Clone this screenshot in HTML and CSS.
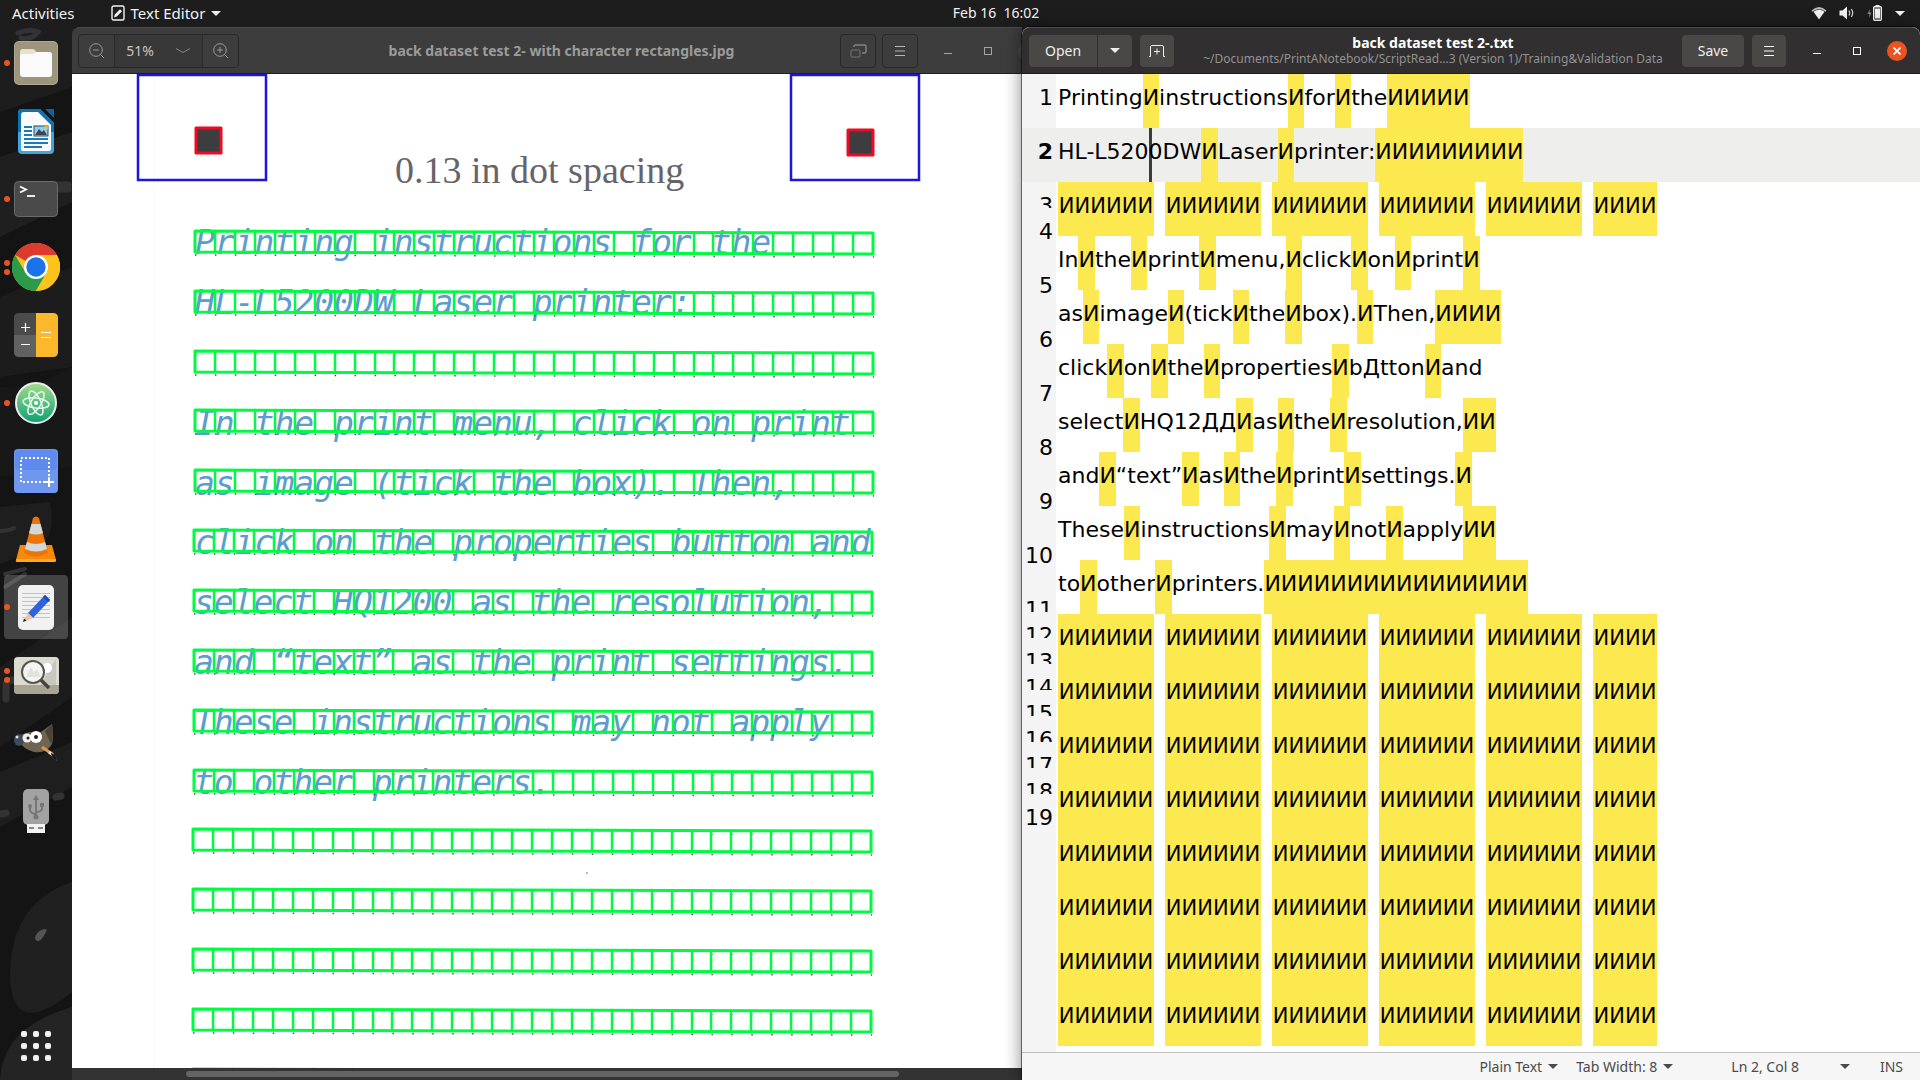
FILE: index.html
```html
<!DOCTYPE html>
<html lang="en">
<head>
<meta charset="utf-8">
<title>back dataset test 2-.txt</title>
<link rel="stylesheet" href="styles.css">
</head>
<body>
<header class="topbar">
  <div class="top-left">
    <button class="top-btn">Activities</button>
    <button class="top-btn app-menu">
      <svg width="14" height="16" viewBox="0 0 14 16"><rect x="1" y="1" width="12" height="14" rx="1.5" fill="none" stroke="#f2f2f2" stroke-width="1.4"/><path d="M3 12.5l.8-3L9 4.2l2 2L5.8 11.5z" fill="#f2f2f2"/></svg>
      Text Editor <i class="arrow"></i>
    </button>
  </div>
  <button class="top-btn clock">Feb 16&nbsp; 16:02</button>
  <button class="top-btn tray" aria-label="System menu">
    <svg width="16" height="14" viewBox="0 0 16 14"><path d="M0.500 4.500Q8-2.500 15.500 4.500L14.300 5.700Q8 .8 1.700 5.700z" fill="#bbb"/><path d="M2.500 5.800Q8 1.600 13.500 5.800L8 13.500z" fill="#f2f2f2"/></svg>
    <svg width="16" height="14" viewBox="0 0 16 14"><path d="M.5 4.500h3L8 .5v13L3.500 9.500h-3z" fill="#f2f2f2"/><path d="M10 4.500q1.600 2.500 0 5M12.300 3q2.800 4 0 8" fill="none" stroke="#d0d0d0" stroke-width="1.300"/></svg>
    <svg width="16" height="16" viewBox="0 0 16 16"><path d="M3 4L.5 9h2l-.5 4 2.500-5.500h-2z" fill="#888"/><rect x="6.700" y="1.700" width="7.600" height="13.600" rx="1" fill="none" stroke="#f2f2f2" stroke-width="1.400"/><path d="M8.500 0h4v2h-4zM8 3.500h5v10H8z" fill="#f2f2f2"/></svg>
    <i class="arrow"></i>
  </button>
</header>
<main class="desktop">
  <nav class="dock" aria-label="Dock">
    <svg class="wallpaper" viewBox="0 0 72 1053" preserveAspectRatio="xMidYMin slice" aria-hidden="true">
      <rect width="72" height="1053" fill="#141414"/>
      <path d="M0 0h72v60L0 85z" fill="#1d1d1d"/><path d="M0 130l72-25v70L0 210z" fill="#1f1f1f"/><path d="M0 270l72-30v100L0 350z" fill="#1c1c1c"/><path d="M0 360q40 0 72-20v100l-72 10z" fill="#181818"/><path d="M0 480l50-5q8 40-20 50l-30 12z" fill="#1e1e1e"/><path d="M0 640l72-50v80L0 720z" fill="#1c1c1c"/><path d="M0 745l72-30v45L0 800z" fill="#1e1e1e"/><path d="M72 855q-60 20-62 90 0 70 62 20z" fill="#202020"/><path d="M72 980q-70 20-72 73h72z" fill="#242424"/>
      <g fill="none" stroke="#333" stroke-linecap="round"><path d="M18 6q12-5 20-1-6 8-17 6" stroke-width="5"/><path d="M42 158h26M48 162h20" stroke-width="7"/><path d="M0 504q8 0 14-3" stroke-width="4"/><path d="M5 560l20-13M5 547l20-5" stroke-width="4"/><path d="M6 672v-14q0-4 6-5" stroke-width="7"/><path d="M56 770l5-1M2 787l4-1" stroke-width="7"/></g>
      <path d="M35 912q0-7 9-10 4 0 2 3-5 10-9 9z" fill="#555"/>
    </svg>
    <ul class="launchers">
      <li><a href="#" aria-label="Files"><i class="dots one"></i>
        <svg width="44" height="44" viewBox="0 0 44 44"><rect width="44" height="44" rx="5" fill="#b0a892"/><rect x="1" y="1" width="42" height="42" rx="4" fill="#9e957d"/><path d="M6 11q0-3 3-3h10q2 0 3 3h13q3 0 3 3v6H6z" fill="#e5e0d0"/><path d="M6 15q0-2 2-2h11l3-2h13q3 0 3 3v19q0 3-3 3H9q-3 0-3-3z" fill="#fafafa"/></svg></a></li>
      <li><a href="#" aria-label="LibreOffice Writer">
        <svg width="36" height="45" viewBox="0 0 36 45"><path d="M4 0h18l14 14v27q0 4-4 4H4q-4 0-4-4V4q0-4 4-4z" fill="#42a6dc"/><path d="M4 0h18l14 14v9H0V4q0-4 4-4z" fill="#0c74b1"/><path d="M6 3h14l13 13v24q0 2-2 2H5q-2 0-2-2V6q0-3 3-3z" fill="#fbfbfb"/><path d="M27 0h9v9z" fill="#0b66a0"/><path d="M6 18h8M6 22h8M6 26h8M6 30h24M6 34h24M6 38h18" stroke="#1c7ab8" stroke-width="2"/><rect x="16" y="17" width="14" height="10" fill="#8fd0f2" stroke="#1b4e70"/><path d="M17 26l4-6 3 3 2-2 3 5z" fill="#444"/><path d="M26 17h4v4z" fill="#f7b500"/></svg></a></li>
      <li><a href="#" aria-label="Terminal"><i class="dots one"></i>
        <svg width="44" height="36" viewBox="0 0 44 36"><rect x=".5" y=".5" width="43" height="35" rx="4" fill="#4a4a4a" stroke="#6b6b6b"/><path d="M6 5.500l6 3-6 3" fill="none" stroke="#fff" stroke-width="1.800"/><path d="M13 15h8" stroke="#fff" stroke-width="1.800"/></svg></a></li>
      <li><a href="#" aria-label="Google Chrome"><i class="dots two"></i>
        <svg width="48" height="48" viewBox="0 0 48 48"><circle cx="24" cy="24" r="24" fill="#fcc31b"/><path d="M24 24L3.200 12A24 24 0 0 1 44.800 12z" fill="#dd3b30"/><path d="M3.200 12A24 24 0 0 0 24 48l10.400-18L24 24 13.600 30z" fill="#2a9b49"/><path d="M44.800 12H24l10.400 18L24 48A24 24 0 0 0 44.800 12z" fill="#fcc31b"/><circle cx="24" cy="24" r="12" fill="#fff"/><circle cx="24" cy="24" r="9.700" fill="#1a73e8"/></svg></a></li>
      <li><a href="#" aria-label="Calculator">
        <svg width="44" height="44" viewBox="0 0 44 44"><path d="M5 0h17v22H0V5q0-5 5-5z" fill="#4b4b4b"/><path d="M0 22h22v22H5q-5 0-5-5z" fill="#616161"/><path d="M22 0h17q5 0 5 5v34q0 5-5 5H22z" fill="#fdb92b"/><path d="M7 14.500h9M11.500 10v9M7 31.500h9M27 19.500h10M27 24.500h10" stroke="#fff" stroke-width="1.200"/></svg></a></li>
      <li><a href="#" aria-label="Atom"><i class="dots one"></i>
        <svg width="42" height="42" viewBox="0 0 42 42"><defs><linearGradient id="atom" x2="0" y2="1"><stop stop-color="#a5dc8d"/><stop offset="1" stop-color="#0aa173"/></linearGradient></defs><circle cx="21" cy="21" r="20" fill="url(#atom)" stroke="#eee" stroke-width="2"/><g fill="none" stroke="#e8f7ec" stroke-width="1.500"><ellipse cx="21" cy="21" rx="13" ry="5" transform="rotate(8 21 21)"/><ellipse cx="21" cy="21" rx="13" ry="5" transform="rotate(66 21 21)"/><ellipse cx="21" cy="21" rx="13" ry="5" transform="rotate(122 21 21)"/></g><circle cx="21" cy="21" r="2" fill="#fff"/></svg></a></li>
      <li><a href="#" aria-label="Screenshot">
        <svg width="44" height="44" viewBox="0 0 44 44"><rect width="44" height="44" rx="4" fill="#6f97ee"/><rect x="1" y="1" width="42" height="20" rx="4" fill="#5f8bee"/><rect x="7" y="9" width="28" height="24" fill="none" stroke="#fff" stroke-width="2" stroke-dasharray="2 2"/><path d="M30 33h10M35 28v10" stroke="#fff" stroke-width="2"/></svg></a></li>
      <li><a href="#" aria-label="VLC media player">
        <svg width="42" height="48" viewBox="0 0 42 48"><path d="M5 30h32l4 15q0 2-2 2H2q-2 0-1-2z" fill="#f58a0c"/><path d="M1 44h40v2q0 1-2 1H2z" fill="#fcaa1b"/><path d="M9 38L18 3q3-3 6 0l9 35q-12 7-24 0z" fill="#ee7408"/><path d="M16.500 9h9l2.500 9q-7 3-14 0zM12 27q9 4 18 0l2 7q-11 5-22 0z" fill="#d5d8da"/></svg></a></li>
      <li><a href="#" class="active" aria-label="Text Editor"><i class="dots one"></i>
        <svg width="36" height="45" viewBox="0 0 36 45"><rect width="36" height="45" rx="5" fill="#f1f1f1"/><path d="M4 8.500h28M4 12.500h28M4 16.500h28M4 20.500h28M4 24.500h28M4 28.500h28M4 32.500h28" stroke="#c3c3c3"/><path d="M10 28L27 10l5 5-17 18z" fill="#2f63dc"/><path d="M25 12l2-2 5 5-2 2z" fill="#1d49b6"/><path d="M10 28l5 5-10 4z" fill="#f0c49c"/><path d="M6 33.500L5 37l3.500-1.500z" fill="#222"/></svg></a></li>
      <li><a href="#" aria-label="Image Viewer"><i class="dots two"></i>
        <svg width="45" height="37" viewBox="0 0 45 37"><rect width="45" height="37" rx="4" fill="#dbdbd0"/><path d="M0 28h45v5q0 4-4 4H4q-4 0-4-4z" fill="#aaa593"/><path d="M26 28L42 2v26z" fill="#c7c8bb"/><circle cx="33" cy="11" r="5" fill="#fff"/><circle cx="19" cy="15" r="11" fill="#f4f4f0" stroke="#555" stroke-width="2"/><path d="M12 20l5-10 3 6 3-4 4 8z" fill="#dfe3dc"/><path d="M27 23l8 8" stroke="#444" stroke-width="3.500"/></svg></a></li>
      <li><a href="#" aria-label="GIMP">
        <svg width="46" height="42" viewBox="0 0 46 42"><path d="M8 13q8-4 20-3l11-8q2 12 0 20-6 10-18 8-11-3-14-10z" fill="#6e6552"/><path d="M32 9l7-7q2 12-1 20z" fill="#4b4436"/><ellipse cx="6" cy="18" rx="5" ry="6" fill="#3c4b57"/><circle cx="4" cy="15" r="1.500" fill="#d5e0e8"/><circle cx="14" cy="16" r="4.500" fill="#eee"/><circle cx="23" cy="15" r="6" fill="#fff"/><circle cx="15" cy="16" r="1.500" fill="#222"/><circle cx="23" cy="15" r="2" fill="#222"/><path d="M29 25l10 7" stroke="#e0954f" stroke-width="3"/><path d="M36 30l4 3" stroke="#ddd" stroke-width="3"/><path d="M38 31q6 2 6 8-5-2-6-8z" fill="#111" stroke="#555" stroke-width=".5"/></svg></a></li>
      <li><a href="#" aria-label="USB drive">
        <svg width="28" height="44" viewBox="0 0 28 44"><rect x="1" width="26" height="36" rx="5" fill="#a2a2a2"/><path d="M5 35h18v9H5z" fill="#f2f2f2"/><path d="M7 38h5v2H7zM16 38h5v2h-5z" fill="#888"/><g stroke="#777" stroke-width="2" fill="none"><path d="M14 9v20M8 17v4q1 4 6 4M20 15v5q-1 3-6 3"/></g><path d="M14 6l3 5h-6z" fill="#777"/><circle cx="8" cy="17" r="2" fill="#777"/><circle cx="14" cy="28" r="2.500" fill="#777"/><path d="M18 14h4v4h-4z" fill="#777"/></svg></a></li>
    </ul>
    <button class="show-apps" aria-label="Show Applications"><i></i><i></i><i></i><i></i><i></i><i></i><i></i><i></i><i></i></button>
  </nav>

  <section class="viewer" aria-label="Image Viewer">
    <div class="titlebar viewer-bar">
      <div class="zoom-group">
        <button aria-label="Zoom out"><svg width="16" height="16" viewBox="0 0 16 16" fill="none" stroke="#9a9a9a"><circle cx="7" cy="7" r="6.300"/><path d="M4 7h6M11.500 11.500L15 15"/></svg></button>
        <button class="zoom-level">51%<svg width="16" height="8" viewBox="0 0 16 8" fill="none" stroke="#8a8a8a"><path d="M1 1.500l7 4 7-4"/></svg></button>
        <button aria-label="Zoom in"><svg width="16" height="16" viewBox="0 0 16 16" fill="none" stroke="#9a9a9a"><circle cx="7" cy="7" r="6.300"/><path d="M4 7h6M7 4v6M11.500 11.500L15 15"/></svg></button>
      </div>
      <h1 class="viewer-title">back dataset test 2- with character rectangles.jpg</h1>
      <div class="viewer-actions">
        <button class="outlined" aria-label="Gallery"><svg width="17" height="14" viewBox="0 0 17 14" fill="none" stroke="#a5a5a5"><path d="M4 3V2q0-1 1-1h10q1 0 1 1v6q0 1-1 1h-3"/><rect x="1" y="6" width="9" height="7" rx="1" stroke="#777"/></svg></button>
        <button class="outlined" aria-label="Menu"><svg width="10" height="10" viewBox="0 0 10 10" stroke="#b5b5b5"><path d="M0 .5h10M0 5h10M0 9.500h10"/></svg></button>
      </div>
      <div class="controls dim">
        <button aria-label="Minimize"><i class="min"></i></button>
        <button aria-label="Maximize"><i class="max"></i></button>
        <button aria-label="Close"><i class="close"></i></button>
      </div>
    </div>
    <div class="scan">
      <svg viewBox="72 74 950 994" preserveAspectRatio="xMinYMin slice" role="img" aria-label="Scanned notebook page">
        <defs>
          <g id="cells">
            <path d="M1 25L680 27" stroke="#555" stroke-width="1.500" stroke-dasharray="1.500 18.440" fill="none"/>
            <path d="M1 5L680 7" stroke="#888" stroke-width="1" stroke-dasharray="1.500 18.440" fill="none"/>
            <g fill="none" stroke="#00fb43" stroke-width="3" stroke-linejoin="round" stroke-linecap="round">
              <path d="M1 1L679 3V24L1 22z"/>
              <path stroke-width="2.500" d="M21 1v21M41 1v21M61 1v21M81 1v21M101 1v21M121 1v21M141 1v21M161 1v21M181 2v21M200 2v21M220 2v21M240 2v21M260 2v21M280 2v21M300 2v21M320 2v21M340 2v21M360 2v21M380 2v21M400 2v21M420 2v21M440 2v21M460 2v21M480 2v21M500 3v21M519 3v21M539 3v21M559 3v21M579 3v21M599 3v21M619 3v21M639 3v21M659 3v21"/>
            </g>
          </g>
        </defs>
        <path d="M154 74v994" stroke="#f7f7f7"/>
        <g fill="none" stroke="#1c14e0" stroke-width="2.500"><rect x="138" y="75" width="128" height="105"/><rect x="791" y="75" width="128" height="105"/></g>
        <g fill="#3d3c3e" stroke="#ee0a22" stroke-width="3" stroke-linejoin="round"><rect x="196" y="128" width="25" height="25"/><rect x="848" y="130" width="25" height="25"/></g>
        <text class="print" x="395" y="183">0.13 in dot spacing</text>
        <g class="ink">
          <text x="195" y="254">Printing instructions for the</text>
          <text x="195" y="314">HL-L5200DW Laser printer:</text>
          <text x="195" y="435">In the print menu, click on print</text>
          <text x="195" y="495">as image (tick the box). Then,</text>
          <text x="195" y="554">click on the properties button and</text>
          <text x="194" y="614">select HQ1200 as the resolution,</text>
          <text x="194" y="674">and “text” as the print settings.</text>
          <text x="194" y="734">These instructions may not apply</text>
          <text x="194" y="794">to other printers.</text>
        </g>
        <use href="#cells" x="194" y="230"/><use href="#cells" x="194" y="290"/><use href="#cells" x="194" y="350"/><use href="#cells" x="194" y="409"/><use href="#cells" x="194" y="469"/><use href="#cells" x="193" y="529"/><use href="#cells" x="193" y="589"/><use href="#cells" x="193" y="649"/><use href="#cells" x="193" y="709"/><use href="#cells" x="193" y="769"/><use href="#cells" x="192" y="828"/><use href="#cells" x="192" y="888"/><use href="#cells" x="192" y="948"/><use href="#cells" x="192" y="1008"/><use href="#cells" x="192" y="1068"/>
        <path d="M587 872v2" stroke="#777"/>
      </svg>
    </div>
    <div class="scrollbar"><i></i></div>
  </section>

  <section class="editor" aria-label="Text Editor">
    <div class="titlebar editor-bar">
      <div class="open-group"><button class="solid open">Open</button><button class="solid" aria-label="Recent files"><i class="arrow"></i></button></div>
      <button class="solid new-tab" aria-label="New tab"><svg width="16" height="12" viewBox="0 0 16 12" fill="none" stroke="#eee"><path d="M0 11.500h1.500V2Q1.500.5 3 .5h10q1.500 0 1.500 1.500v9.500H16M8 3.500v6M5 6.500h6"/></svg></button>
      <div class="doc-title"><h2>back dataset test 2-.txt</h2><p>~/Documents/PrintANotebook/ScriptRead…3 (Version 1)/Training&amp;Validation Data</p></div>
      <button class="solid save">Save</button>
      <button class="solid" aria-label="Menu"><svg width="10" height="10" viewBox="0 0 10 10" stroke="#fff"><path d="M0 .5h10M0 5h10M0 9.500h10"/></svg></button>
      <div class="controls">
        <button aria-label="Minimize"><i class="min"></i></button>
        <button aria-label="Maximize"><i class="max"></i></button>
        <button aria-label="Close"><i class="close"><svg width="8" height="8" viewBox="0 0 8 8" stroke="#fff" stroke-width="1.800"><path d="M.5.5l7 7M7.500.5l-7 7"/></svg></i></button>
      </div>
    </div>
    <div class="document">
      <ol class="gutter">
        <li>1</li><li class="current">2</li><li class="cut">3</li><li>4</li><li>5</li><li>6</li><li>7</li><li>8</li><li>9</li><li>10</li><li class="cut">11</li><li class="cut">12</li><li class="cut">13</li><li class="cut">14</li><li class="cut">15</li><li class="cut">16</li><li class="cut">17</li><li class="cut">18</li><li>19</li>
      </ol>
      <div class="lines">
        <p>Printing<mark>И</mark>instructions<mark>И</mark>for<mark>И</mark>the<mark>ИИИИИ</mark></p>
        <p class="current">HL-L520<i class="caret"></i>0DW<mark>И</mark>Laser<mark>И</mark>printer:<mark>ИИИИИИИИИ</mark></p>
        <p class="blank"><mark>ИИИИИИ</mark><mark>ИИИИИИ</mark><mark>ИИИИИИ</mark><mark>ИИИИИИ</mark><mark>ИИИИИИ</mark><mark>ИИИИ</mark></p>
        <p>In<mark>И</mark>the<mark>И</mark>print<mark>И</mark>menu,<mark>И</mark>click<mark>И</mark>on<mark>И</mark>print<mark>И</mark></p>
        <p>as<mark>И</mark>image<mark>И</mark>(tick<mark>И</mark>the<mark>И</mark>box).<mark>И</mark>Then,<mark>ИИИИ</mark></p>
        <p>click<mark>И</mark>on<mark>И</mark>the<mark>И</mark>properties<mark>И</mark>bДtton<mark>И</mark>and</p>
        <p>select<mark>И</mark>HQ12ДД<mark>И</mark>as<mark>И</mark>the<mark>И</mark>resolution,<mark>ИИ</mark></p>
        <p>and<mark>И</mark>“text”<mark>И</mark>as<mark>И</mark>the<mark>И</mark>print<mark>И</mark>settings.<mark>И</mark></p>
        <p>These<mark>И</mark>instructions<mark>И</mark>may<mark>И</mark>not<mark>И</mark>apply<mark>ИИ</mark></p>
        <p>to<mark>И</mark>other<mark>И</mark>printers.<mark>ИИИИИИИИИИИИИИИИ</mark></p>
        <p class="blank"><mark>ИИИИИИ</mark><mark>ИИИИИИ</mark><mark>ИИИИИИ</mark><mark>ИИИИИИ</mark><mark>ИИИИИИ</mark><mark>ИИИИ</mark></p>
        <p class="blank"><mark>ИИИИИИ</mark><mark>ИИИИИИ</mark><mark>ИИИИИИ</mark><mark>ИИИИИИ</mark><mark>ИИИИИИ</mark><mark>ИИИИ</mark></p>
        <p class="blank"><mark>ИИИИИИ</mark><mark>ИИИИИИ</mark><mark>ИИИИИИ</mark><mark>ИИИИИИ</mark><mark>ИИИИИИ</mark><mark>ИИИИ</mark></p>
        <p class="blank"><mark>ИИИИИИ</mark><mark>ИИИИИИ</mark><mark>ИИИИИИ</mark><mark>ИИИИИИ</mark><mark>ИИИИИИ</mark><mark>ИИИИ</mark></p>
        <p class="blank"><mark>ИИИИИИ</mark><mark>ИИИИИИ</mark><mark>ИИИИИИ</mark><mark>ИИИИИИ</mark><mark>ИИИИИИ</mark><mark>ИИИИ</mark></p>
        <p class="blank"><mark>ИИИИИИ</mark><mark>ИИИИИИ</mark><mark>ИИИИИИ</mark><mark>ИИИИИИ</mark><mark>ИИИИИИ</mark><mark>ИИИИ</mark></p>
        <p class="blank"><mark>ИИИИИИ</mark><mark>ИИИИИИ</mark><mark>ИИИИИИ</mark><mark>ИИИИИИ</mark><mark>ИИИИИИ</mark><mark>ИИИИ</mark></p>
        <p class="blank"><mark>ИИИИИИ</mark><mark>ИИИИИИ</mark><mark>ИИИИИИ</mark><mark>ИИИИИИ</mark><mark>ИИИИИИ</mark><mark>ИИИИ</mark></p>
      </div>
    </div>
    <footer class="status">
      <button>Plain Text <i class="arrow"></i></button>
      <button>Tab Width: 8 <i class="arrow"></i></button>
      <button class="position">Ln 2, Col 8 <i class="arrow"></i></button>
      <span>INS</span>
    </footer>
  </section>
</main>
</body>
</html>
```
FILE: styles.css
```css
* { box-sizing: border-box; }

body {
  margin: 0;
  height: 100vh;
  display: flex;
  flex-direction: column;
  overflow: hidden;
  background: #1d1d1d;
  font: 14px/18px "Noto Sans", "Open Sans", sans-serif;
}

button {
  display: flex;
  align-items: center;
  justify-content: center;
  margin: 0;
  padding: 0;
  border: 0;
  background: none;
  color: inherit;
  font: inherit;
}

svg { display: block; flex: none; }
h1, h2, p, ul, ol { margin: 0; padding: 0; }
li { list-style: none; }

.arrow {
  border: 5px solid transparent;
  border-top-color: currentColor;
  border-bottom: 0;
}

/* top panel */
.topbar {
  flex: 0 0 27px;
  display: grid;
  grid-template-columns: 1fr auto 1fr;
  padding-bottom: 1px;
  background: #1d1d1d;
  color: #f2f2f2;
  font-size: 15px;
}
.top-left { display: flex; gap: 36px; padding-left: 12px; }
.app-menu { gap: 6px; }
.clock { margin-left: 72px; font-size: 14px; }
.tray { justify-self: end; gap: 12px; padding-right: 15px; }

.desktop {
  flex: 1;
  min-height: 0;
  display: grid;
  grid-template-columns: 72px minmax(0, 950fr) minmax(0, 898fr);
}

/* dock */
.dock {
  position: relative;
  display: flex;
  flex-direction: column;
  justify-content: space-between;
  padding: 4px 4px 19px;
  overflow: hidden;
}
.wallpaper { position: absolute; inset: 0; width: 100%; height: 100%; }
.launchers { position: relative; display: flex; flex-direction: column; gap: 4px; }
.launchers a {
  position: relative;
  display: flex;
  align-items: center;
  justify-content: center;
  height: 64px;
  border-radius: 4px;
}
.launchers .active { background: rgba(255, 255, 255, .2); }
.dots { position: absolute; left: 0; display: grid; gap: 3px; }
.dots::before, .dots.two::after {
  content: "";
  width: 6px;
  height: 6px;
  border-radius: 50%;
  background: #e95420;
}
.show-apps {
  position: relative;
  align-self: center;
  display: grid;
  grid-template-columns: repeat(3, 6px);
  gap: 6px;
}
.show-apps i { width: 6px; height: 6px; border-radius: 2px; background: #f2f2f2; }

/* shared window chrome */
.titlebar {
  flex: 0 0 47px;
  display: flex;
  align-items: center;
  border-top: 1px solid #4c4c4c;
  border-bottom: 1px solid #1f1f1f;
  border-radius: 8px 8px 0 0;
}
.controls { display: flex; color: #fff; }
.controls button { width: 40px; height: 40px; }
.controls.dim { color: #a5a5a5; }
.min { width: 8px; height: 1px; margin-top: 5px; background: currentColor; }
.max { width: 8px; height: 8px; border: 1px solid currentColor; }
.close {
  display: grid;
  place-items: center;
  width: 20px;
  height: 20px;
  border-radius: 50%;
  background: #e95420;
}
.dim .close { background: #4a4a4a; }

/* image viewer */
.viewer {
  display: flex;
  flex-direction: column;
  min-width: 0;
  overflow: hidden;
}
.viewer-bar {
  margin-right: -26px;
  padding-left: 6px;
  background: #3d3d3d;
}
.zoom-group {
  display: flex;
  border: 1px solid #292929;
  border-radius: 4px;
}
.zoom-group button { width: 35px; height: 32px; }
.zoom-group .zoom-level {
  width: 89px;
  gap: 21px;
  border: solid #292929;
  border-width: 0 1px;
  background: #383838;
  color: #c5c5c5;
}
.viewer-title {
  flex: 1;
  padding-left: 44px;
  font-size: 14px;
  line-height: 18px;
  text-align: center;
  white-space: nowrap;
  color: #9b9b9b;
}
.viewer-actions { display: flex; gap: 6px; padding-right: 10px; }
.outlined { width: 36px; height: 34px; border: 1px solid #292929; border-radius: 4px; }
.scan { flex: 1; min-height: 0; background: #fff; }
.scan svg { width: 100%; height: 100%; }
.print { font: 38px "Liberation Serif", serif; fill: #66646a; }
.ink { font: italic 33px "DejaVu Sans Mono", monospace; fill: #5c9dcd; white-space: pre; }
.scrollbar { flex: 0 0 12px; padding: 3px 13% 3px 12%; background: #333; }
.scrollbar i { display: block; height: 6px; border-radius: 3px; background: #646464; }

/* text editor */
.editor {
  position: relative;
  display: flex;
  flex-direction: column;
  min-width: 0;
  background: #fff;
  box-shadow: 0 0 0 1px rgba(0, 0, 0, .5), 0 2px 18px rgba(0, 0, 0, .5);
  border-radius: 8px 8px 0 0;
}
.editor-bar { padding: 0 3px 0 7px; background: #312f30; color: #eee; }
.solid { width: 34px; height: 32px; background: #4a4846; border-radius: 4px; }
.open-group { display: flex; gap: 1px; }
.open-group .open { width: 68px; border-radius: 4px 0 0 4px; }
.open-group .solid:last-child { border-radius: 0 4px 4px 0; }
.new-tab { margin-left: 8px; }
.save { width: 62px; margin-right: 8px; }
.editor-bar .controls { margin-left: 11px; }
.doc-title { flex: 1; min-width: 0; padding-left: 10px; text-align: center; white-space: nowrap; }
.doc-title h2 { font-size: 14px; line-height: 16px; color: #fff; }
.doc-title p { font-size: 12px; line-height: 15px; color: #929292; }

.document {
  flex: 1;
  min-height: 0;
  display: flex;
  overflow: hidden;
  font: 22px/48px "DejaVu Sans", sans-serif;
  color: #000;
}
.gutter { flex: 0 0 34px; padding: 0; background: #f4f4f4; text-align: right; }
.gutter li { height: 54px; padding-right: 3px; }
.gutter .cut { height: 26px; overflow: hidden; }
.gutter .current { font-weight: bold; background: #eeeeec; }
.lines { flex: 1; min-width: 0; }
.lines p { display: flex; height: 54px; padding-left: 2px; white-space: nowrap; }
.lines .current { background: #eeeeec; }
mark { background: #fce94f; color: inherit; }
.lines .blank { gap: 11px; font-size: 21px; }
.blank mark { flex: 0 0 96px; text-align: center; }
.blank mark:last-child { flex-basis: 64px; }
.caret { width: 3px; margin-right: -3px; background: #3c3c3c; }

.status {
  flex: 0 0 28px;
  display: flex;
  align-items: center;
  justify-content: flex-end;
  padding-right: 17px;
  border-top: 1px solid #c0c0c0;
  background: #f6f6f6;
  color: #4a4a4a;
}
.status button { gap: 6px; margin-right: 18px; }
.status .position { gap: 41px; margin-left: 40px; margin-right: 30px; }
```
